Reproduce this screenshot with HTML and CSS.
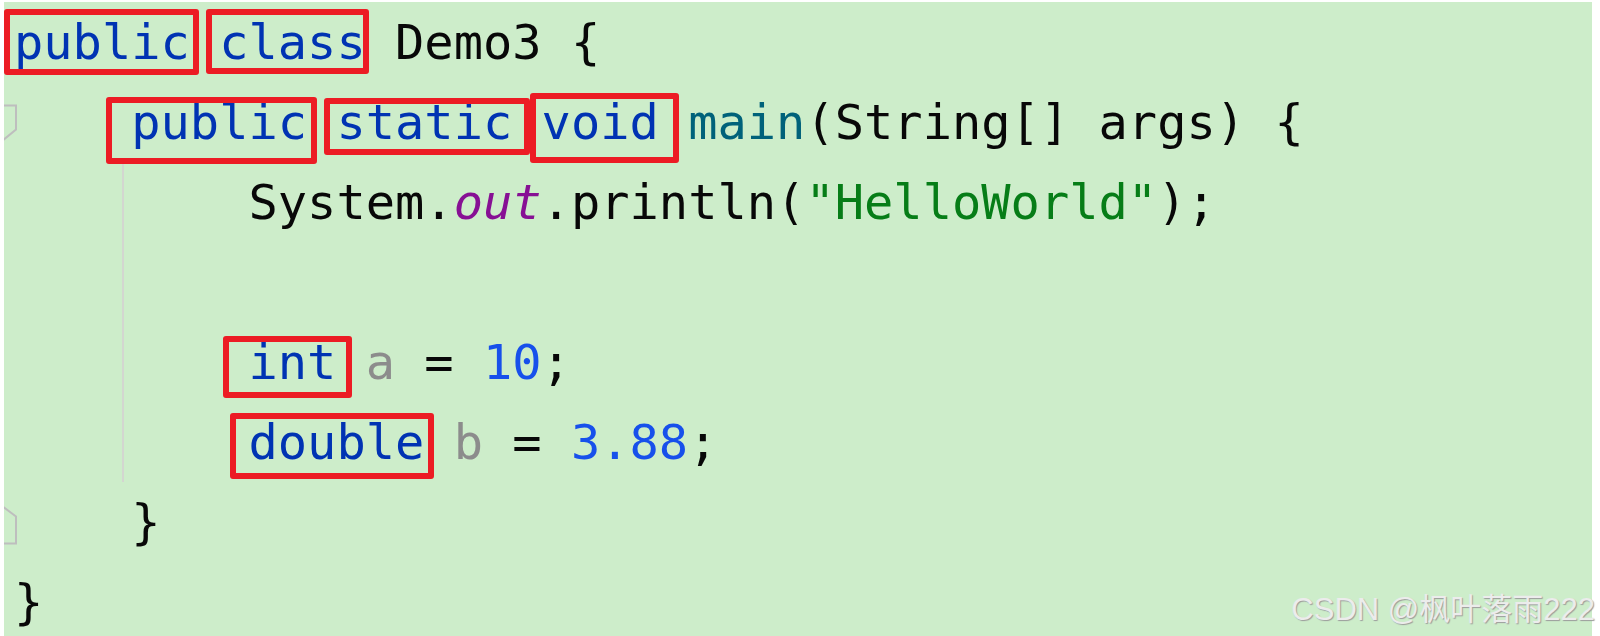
FILE: index.html
```html
<!DOCTYPE html>
<html lang="zh-CN">
<head>
<meta charset="utf-8">
<title>Demo3</title>
<link rel="stylesheet" href="styles.css">
</head>
<body>
<div class="panel">
  <div class="code">
    <div class="line"><span class="kw">public</span> <span class="kw">class</span> Demo3 {</div>
    <div class="line indent1"><svg class="fold fold-open" width="16" height="40" viewBox="0 0 16 40"><path d="M-2 1.5 H12 V25.5 L-2 37" fill="none" stroke="#bebebe" stroke-width="2"/></svg><span class="kw">public</span> <span class="kw">static</span> <span class="kw">void</span> <span class="fn">main</span>(String[] args) {</div>
    <div class="body">
      <div class="line">System.<span class="field">out</span>.println(<span class="str">"HelloWorld"</span>);</div>
      <div class="line"></div>
      <div class="line"><span class="kw">int</span> <span class="unused">a</span> = <span class="num">10</span>;</div>
      <div class="line"><span class="kw">double</span> <span class="unused">b</span> = <span class="num">3.88</span>;</div>
    </div>
    <div class="line indent1"><svg class="fold fold-close" width="16" height="40" viewBox="0 0 16 40"><path d="M-2 0 L12 10.5 V37.5 H-2" fill="none" stroke="#bebebe" stroke-width="2"/></svg>}</div>
    <div class="line">}</div>
  </div>

  <div class="marks">
    <span class="box box-public1"></span>
    <span class="box box-class"></span>
    <span class="box box-public2"></span>
    <span class="box box-static"></span>
    <span class="box box-void"></span>
    <span class="box box-int"></span>
    <span class="box box-double"></span>
  </div>

  <div class="watermark">CSDN @枫叶落雨222</div>
</div>
</body>
</html>
```
FILE: styles.css
```css
html, body {
  margin: 0;
  background: #ffffff;
}
body {
  padding: 2px 8px 0 4px;
  height: 636px;
  box-sizing: border-box;
  overflow: hidden;
}
.panel {
  position: relative;
  height: 634px;
  background: #cdedca;
}
.code {
  margin-top: 0;
  padding-left: 10px;
  font-family: "DejaVu Sans Mono", "Liberation Mono", monospace;
  font-size: 48.7px;
  line-height: 80px;
  color: #080808;
}
.line {
  height: 80px;
  position: relative;
  white-space: pre;
}
.indent1 {
  padding-left: 4ch;
}
.body {
  margin-left: 108px;
  border-left: 2px solid #d3d6d0;
  padding-left: calc(8ch - 110px);
}
.kw { color: #0033b3; }
.fn { color: #00627a; }
.field { color: #871094; font-style: italic; }
.str { color: #067d17; }
.num { color: #1750eb; }
.unused { color: #8c8c8c; }

.fold {
  position: absolute;
  left: -10px;
  top: 22px;
}
.fold-close {
  top: 24px;
}

.marks {
  position: absolute;
  inset: 0;
  pointer-events: none;
}
.box {
  position: absolute;
  box-sizing: border-box;
  border: 6px solid #ec1c24;
  border-radius: 3px;
}
.box-public1 { left: 0;   top: 7px;   width: 195px; height: 66px; }
.box-class   { left: 202px; top: 7px; width: 163px; height: 65px; }
.box-public2 { left: 102px; top: 95px; width: 211px; height: 67px; }
.box-static  { left: 320px; top: 96px; width: 206px; height: 57px; }
.box-void    { left: 526px; top: 91px; width: 149px; height: 70px; }
.box-int     { left: 219px; top: 334px; width: 129px; height: 62px; }
.box-double  { left: 226px; top: 411px; width: 204px; height: 66px; }

.watermark {
  position: absolute;
  right: -3px;
  bottom: 8px;
  font-family: "Liberation Sans", "Noto Sans CJK SC", sans-serif;
  font-size: 31px;
  line-height: 36px;
  color: #ececec;
  text-shadow: 1px 1px 1px #9c9c9c;
  white-space: nowrap;
}
```
